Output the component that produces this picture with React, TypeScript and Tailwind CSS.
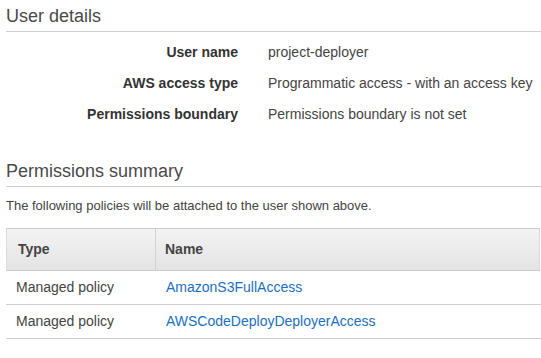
import React from "react";

const rows = [
  { label: "User name", value: "project-deployer" },
  { label: "AWS access type", value: "Programmatic access - with an access key" },
  { label: "Permissions boundary", value: "Permissions boundary is not set" },
];

const policies = [
  { type: "Managed policy", name: "AmazonS3FullAccess" },
  { type: "Managed policy", name: "AWSCodeDeployDeployerAccess" },
];

export default function App() {
  return (
    <div
      className="w-[541px] h-[358px] bg-white pl-[6px] text-[#444] overflow-hidden"
      style={{ fontFamily: '"Liberation Sans", Arial, sans-serif' }}
    >
      <div className="text-[18px] leading-[20px] pt-[6px] pb-[5px] border-b border-[#cfcfcf] text-[#4a4a4a]">
        User details
      </div>
      <div className="mt-[10px] flex flex-col gap-[11px] text-[14px] leading-[20px]">
        {rows.map((r) => (
          <div key={r.label} className="flex">
            <div className="w-[232px] text-right font-bold text-[#333]">{r.label}</div>
            <div className="ml-[30px] text-[#444]">{r.value}</div>
          </div>
        ))}
      </div>
      <div className="mt-[37px] text-[18px] leading-[20px] pb-[5px] border-b border-[#cfcfcf] text-[#4a4a4a]">
        Permissions summary
      </div>
      <div className="mt-[9px] text-[13px] leading-[20px] text-[#444]">
        The following policies will be attached to the user shown above.
      </div>
      <div className="mt-[12px] text-[14px]">
        <div className="flex h-[43px] border-t border-b border-[#cccccc] border-l border-l-[#dcdcdc] border-r border-r-[#dcdcdc] bg-gradient-to-b from-[#f3f3f3] to-[#e4e4e4] font-bold text-[#444] w-[534px]">
          <div className="w-[149px] pl-[11px] flex items-center border-r border-[#d2d2d2]">Type</div>
          <div className="pl-[9px] flex items-center">Name</div>
        </div>
        {policies.map((p) => (
          <div key={p.name} className="flex h-[34px] border-b border-[#cfcfcf]">
            <div className="w-[150px] pl-[10px] flex items-center text-[#444]">{p.type}</div>
            <div className="pl-[10px] flex items-center text-[#1b6fc2]">{p.name}</div>
          </div>
        ))}
      </div>
    </div>
  );
}
